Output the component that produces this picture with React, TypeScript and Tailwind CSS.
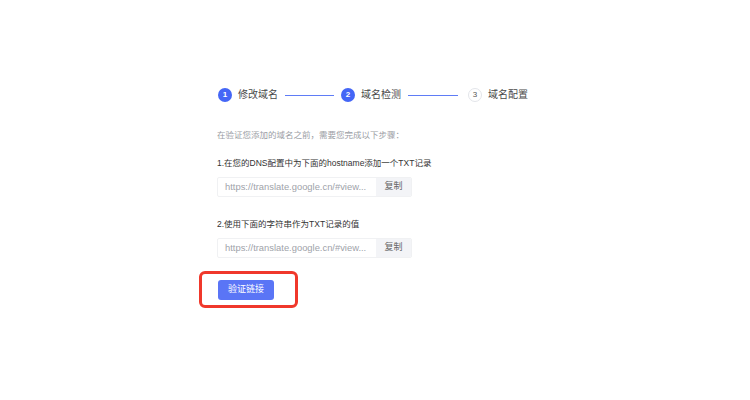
const FONT = { fontFamily: '"Liberation Sans", "Noto Sans CJK SC", sans-serif' }

type StepProps = {
  index: number
  label: string
  active: boolean
}

function Step({ index, label, active }: StepProps) {
  return (
    <div className="flex items-center">
      <span
        className={
          active
            ? 'flex h-[14px] w-[14px] items-center justify-center rounded-full bg-[#4466f6] text-[8px] font-bold leading-none text-white'
            : 'flex h-[14px] w-[14px] items-center justify-center rounded-full border border-[#e3e5ea] bg-white text-[8px] leading-none text-[#555]'
        }
      >
        {index}
      </span>
      <span className="ml-[6px] text-[10px] leading-[14px] text-[#4a4a4a]">{label}</span>
    </div>
  )
}

function CopyField({ value }: { value: string }) {
  return (
    <div className="mt-[8px] flex h-[20px] w-[195px] overflow-hidden rounded-[2px] border border-[#f0f1f3]">
      <div className="flex flex-1 items-center px-[7px] text-[9.4px] text-[#a0a3aa]">{value}</div>
      <button className="flex w-[35px] items-center justify-center bg-[#f3f4f7] text-[9px] text-[#666]">复制</button>
    </div>
  )
}

export default function App() {
  const url = 'https://translate.google.cn/#view...'

  return (
    <div className="min-h-[400px] w-full bg-white" style={FONT}>
      <div className="mx-auto w-[316px] pt-[88px]">
        <div className="flex items-center pl-[1px]">
          <Step index={1} label="修改域名" active />
          <div className="ml-[7px] h-px w-[49px] bg-[#5f7cf6]" />
          <div className="ml-[7px]">
            <Step index={2} label="域名检测" active />
          </div>
          <div className="ml-[7px] h-px w-[50px] bg-[#5f7cf6]" />
          <div className="ml-[10px]">
            <Step index={3} label="域名配置" active={false} />
          </div>
        </div>

        <p className="mt-[27px] h-[12px] text-[8.5px] leading-[12px] text-[#9a9da4]">
          在验证您添加的域名之前，需要您完成以下步骤：
        </p>

        <p className="mt-[16px] h-[12px] text-[8.5px] leading-[12px] text-[#333]">
          1.在您的DNS配置中为下面的hostname添加一个TXT记录
        </p>
        <CopyField value={url} />

        <p className="mt-[21px] h-[12px] text-[8.5px] leading-[12px] text-[#333]">2.使用下面的字符串作为TXT记录的值</p>
        <CopyField value={url} />

        <div className="-ml-[18px] mt-[13px] flex h-[37px] w-[99px] items-center rounded-[6px] border-[3px] border-[#f0382b] pl-[16px] pt-px">
          <button className="h-[20px] w-[56px] rounded-[3px] bg-[#5a75f6] text-[9px] text-white">验证链接</button>
        </div>
      </div>
    </div>
  )
}
